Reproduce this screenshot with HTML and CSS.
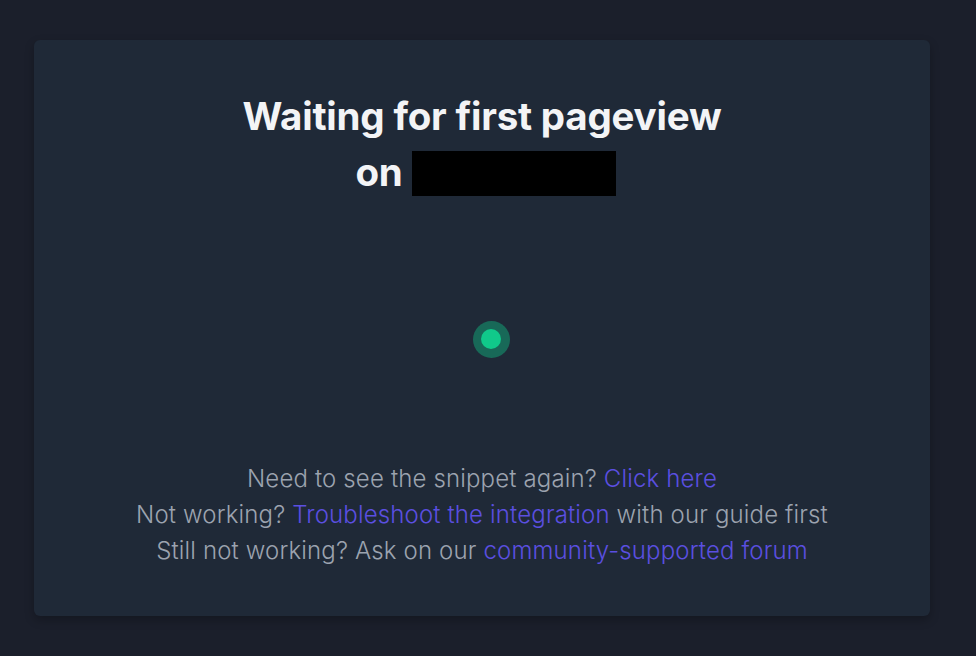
FILE: index.html
```html
<!DOCTYPE html>
<html>
<head>
<meta charset="utf-8">
<link rel="stylesheet" href="styles.css">
</head>
<body>
<div class="page">
  <div class="card">
    <h2 class="title">Waiting for first pageview<br><span class="on">on</span> <span class="domain"></span></h2>
    <div class="dot-wrap">
      <div class="dot"><div class="dot-core"></div></div>
    </div>
    <div class="help">
      <p>Need to see the snippet again? <a href="#">Click here</a></p>
      <p>Not working? <a href="#">Troubleshoot the integration</a> with our guide first</p>
      <p>Still not working? Ask on our <a href="#">community-supported forum</a></p>
    </div>
  </div>
</div>
</body>
</html>
```
FILE: styles.css
```css
* { box-sizing: border-box; }
html, body { margin: 0; padding: 0; }
body {
  background: #1b1f2b;
  font-family: Inter, "Noto Sans", sans-serif;
  width: 976px;
  height: 656px;
  overflow: hidden;
}
.page {
  padding: 40px 46px 0 34px;
}
.card {
  width: 896px;
  height: 576px;
  background: #1f2937;
  border-radius: 6px;
  box-shadow: 0 4px 10px rgba(0,0,0,0.25);
  display: flex;
  flex-direction: column;
  align-items: center;
  padding-top: 48px;
}
.title {
  margin: 0;
  color: #f3f4f6;
  font-size: 38.5px;
  font-weight: 700;
  line-height: 56px;
  text-align: center;
  letter-spacing: -0.2px;
}
.on {
  margin-left: 7px;
}
.domain {
  display: inline-block;
  width: 204px;
  height: 45px;
  background: #000;
  vertical-align: -10px;
}
.dot-wrap {
  margin-top: 120px;
  height: 38px;
  display: flex;
  align-items: center;
  justify-content: center;
  padding-left: 18px;
}
.dot {
  width: 37px;
  height: 37px;
  border-radius: 50%;
  background: rgba(16, 185, 129, 0.45);
  display: flex;
  align-items: center;
  justify-content: center;
}
.dot-core {
  width: 20px;
  height: 20px;
  border-radius: 50%;
  background: #10c98a;
}
.help {
  margin-top: 103px;
  text-align: center;
  color: #9ca3af;
  font-size: 24px;
  font-weight: 300;
  line-height: 36px;
  letter-spacing: 0.15px;
}
.help p { margin: 0; }
.help a {
  color: #5b4fe0;
  text-decoration: none;
}
```
